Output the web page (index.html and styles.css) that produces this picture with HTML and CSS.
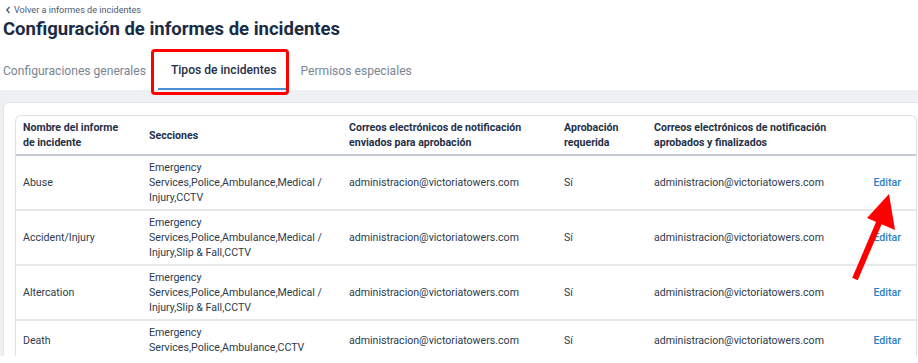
FILE: index.html
```html
<!DOCTYPE html>
<html lang="es">
<head>
<meta charset="utf-8">
<title>Configuración de informes de incidentes</title>
<link rel="stylesheet" href="styles.css">
</head>
<body>
<div class="page">
  <header class="head">
    <a class="back" href="#"><svg class="chev" width="6" height="8" viewBox="0 0 6 8"><path d="M4.5 1 L1.8 4 L4.5 7" fill="none" stroke="#4a5a70" stroke-width="1.3"/></svg>Volver a informes de incidentes</a>
    <h1 class="title">Configuración de informes de incidentes</h1>
    <nav class="tabs">
      <a class="tab" href="#">Configuraciones generales</a>
      <a class="tab active" href="#">Tipos de incidentes</a>
      <a class="tab" href="#">Permisos especiales</a>
      <span class="highlight"></span>
    </nav>
  </header>
  <main class="band">
    <section class="card">
      <div class="tablewrap">
        <table class="grid">
          <colgroup>
            <col class="c1"><col class="c2"><col class="c3"><col class="c4"><col class="c5"><col class="c6">
          </colgroup>
          <thead>
            <tr>
              <th class="first">Nombre del informe de incidente</th>
              <th>Secciones</th>
              <th>Correos electrónicos de notificación enviados para aprobación</th>
              <th>Aprobación requerida</th>
              <th>Correos electrónicos de notificación aprobados y finalizados</th>
              <th></th>
            </tr>
          </thead>
          <tbody>
            <tr>
              <td>Abuse</td>
              <td>Emergency Services,Police,Ambulance,Medical / Injury,CCTV</td>
              <td>administracion@victoriatowers.com</td>
              <td>Sí</td>
              <td>administracion@victoriatowers.com</td>
              <td class="act"><a href="#">Editar</a></td>
            </tr>
            <tr>
              <td>Accident/Injury</td>
              <td>Emergency Services,Police,Ambulance,Medical / Injury,Slip &amp; Fall,CCTV</td>
              <td>administracion@victoriatowers.com</td>
              <td>Sí</td>
              <td>administracion@victoriatowers.com</td>
              <td class="act"><a href="#">Editar</a></td>
            </tr>
            <tr>
              <td>Altercation</td>
              <td>Emergency Services,Police,Ambulance,Medical / Injury,Slip &amp; Fall,CCTV</td>
              <td>administracion@victoriatowers.com</td>
              <td>Sí</td>
              <td>administracion@victoriatowers.com</td>
              <td class="act"><a href="#">Editar</a></td>
            </tr>
            <tr>
              <td>Death</td>
              <td>Emergency Services,Police,Ambulance,CCTV</td>
              <td>administracion@victoriatowers.com</td>
              <td>Sí</td>
              <td>administracion@victoriatowers.com</td>
              <td class="act"><a href="#">Editar</a></td>
            </tr>
          </tbody>
        </table>
      </div>
    </section>
  </main>
  <svg class="arrow" width="60" height="100" viewBox="0 0 60 100">
    <line x1="7" y1="91" x2="33" y2="30" stroke="#f00" stroke-width="6"/>
    <polygon points="41,6 47,42 19,30" fill="#f00"/>
  </svg>
</div>
</body>
</html>
```

FILE: styles.css
```css
* { box-sizing: border-box; }
html, body { margin: 0; padding: 0; background: #fff; }
body {
  font-family: Roboto, "Liberation Sans", Arial, sans-serif;
  color: #2c3b4e;
  overflow: hidden;
}
.page { position: relative; width: 918px; height: 363px; overflow: hidden; }

.head { padding: 4px 0 0 3px; }
.back {
  display: flex; align-items: center; gap: 3px;
  font-size: 9.1px; line-height: 12px; color: #4a5a70; text-decoration: none;
  padding-left: 2px;
}
.title {
  margin: 0;
  font-size: 18.5px; line-height: 26px; font-weight: 700; color: #1a2b45;
}
.tabs { position: relative; display: flex; margin-top: 8px; height: 40px; }
.tab {
  display: flex; align-items: center;
  font-size: 12.1px; color: #7a8594; text-decoration: none;
  height: 40px; padding-top: 2px;
}
.tab:first-child { margin-right: 12px; }
.tab.active {
  color: #1f3048; font-weight: 500;
  padding: 2px 12px 0 13px;
  border-bottom: 2px solid #4a8fd1;
  margin-right: 12px;
}
.highlight {
  position: absolute; left: 148px; top: -1px; width: 138px; height: 46px;
  border: 3px solid #f00; border-radius: 4px;
}

.band { background: #eef0f3; padding: 12px 0 0 3px; height: 266px; overflow: hidden; }
.card {
  background: #fff; border: 1px solid #e1e4e8; border-right: 0;
  border-radius: 6px 0 0 0; padding: 12px 0 0 11px; height: 300px;
}
.tablewrap {
  border: 1px solid #dde1e6; border-bottom: 0; border-radius: 6px 6px 0 0;
  overflow: hidden; width: 902px;
}
.grid { border-collapse: separate; border-spacing: 0; width: 100%; table-layout: fixed; font-size: 10.6px; line-height: 15px; }
.c1 { width: 126px; } .c2 { width: 200px; } .c3 { width: 215px; } .c4 { width: 90px; } .c5 { width: 214px; } .c6 { width: 55px; }
.grid th {
  text-align: left; font-weight: 700; color: #1f3048;
  padding: 4px 7px; vertical-align: middle;
  border-bottom: 2px solid #c3cad3;
}
.grid th.first { padding-right: 18px; }
.grid td {
  padding: 4px 7px; vertical-align: middle; color: #2c3b4e;
  border-bottom: 2px solid #e6e9ec;
}
.grid .act { text-align: right; padding-right: 15px; }
.grid .act a { color: #2a7fc4; text-decoration: none; font-weight: 500; }

.arrow { position: absolute; left: 848px; top: 188px; }
```
